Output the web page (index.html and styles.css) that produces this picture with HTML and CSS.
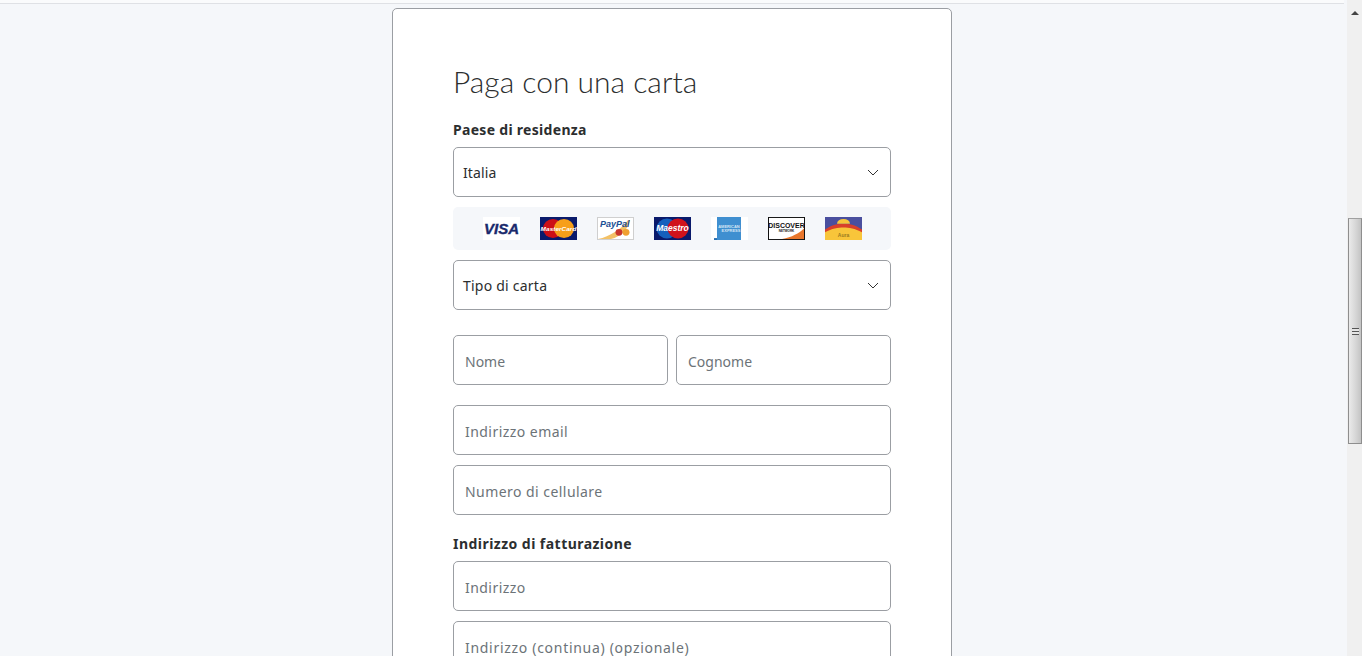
FILE: index.html
```html
<!DOCTYPE html>
<html lang="it">
<head>
  <meta charset="UTF-8" />
  <meta name="viewport" content="width=device-width, initial-scale=1.0"/>
  <title>Paga con una carta</title>
  <link rel="stylesheet" href="styles.css">
</head>

<body>
  <div class="page">
    <main class="main">
      <div class="topline"></div>
      <form class="card">
        <h1 class="title">Paga con una carta</h1>

        <div class="label">Paese di residenza</div>
        <div class="select">
          <span>Italia</span>
          <svg class="chev" width="12" height="7" viewBox="0 0 12 7"><path d="M1 1l5 5 5-5" fill="none" stroke="#333" stroke-width="1"/></svg>
        </div>

        <div class="logos">
          <svg class="logo" viewBox="0 0 37 24" preserveAspectRatio="none">
            <rect width="37" height="24" fill="#fff"/>
            <text x="18.500" y="18" text-anchor="middle" class="t-visa">VISA</text>
          </svg>
          <svg class="logo" viewBox="0 0 37 24" preserveAspectRatio="none">
            <rect width="37" height="24" fill="#0a1a6b"/>
            <circle cx="13" cy="12" r="10" fill="#cc0f16"/>
            <circle cx="24" cy="12" r="10" fill="#f79f1a"/>
            <text x="18.500" y="14.500" text-anchor="middle" class="t-mc">MasterCard</text>
          </svg>
          <svg class="logo" viewBox="0 0 37 24" preserveAspectRatio="none">
            <rect x="0.500" y="0.500" width="36" height="23" fill="#fff" stroke="#cfcfcf"/>
            <path d="M1 23C13 20 24 13 31 3l2 0C31 13 24 20 14 23z" fill="#f3c166"/>
            <text x="3" y="10" class="t-pp">PayPal</text>
            <circle cx="22" cy="16" r="3.500" fill="#c8362e"/>
            <circle cx="29" cy="16" r="3.500" fill="#f0a030"/>
          </svg>
          <svg class="logo" viewBox="0 0 37 24" preserveAspectRatio="none">
            <rect width="37" height="24" fill="#0a1a6b"/>
            <circle cx="13" cy="12" r="10.500" fill="#1560bd"/>
            <circle cx="24" cy="12" r="10.500" fill="#d0121b"/>
            <text x="18.500" y="14.500" text-anchor="middle" class="t-ma">Maestro</text>
          </svg>
          <svg class="logo" viewBox="0 0 37 24" preserveAspectRatio="none">
            <rect width="37" height="24" fill="#fff"/>
            <rect x="6" y="0" width="24" height="24" fill="#3f8fd0"/>
            <text x="18" y="11" text-anchor="middle" class="t-amex">AMERICAN</text>
            <text x="20" y="16" text-anchor="middle" class="t-amex">EXPRESS</text>
            <rect x="3" y="22" width="3" height="2" fill="#2a6fb0"/>
          </svg>
          <svg class="logo" viewBox="0 0 37 24" preserveAspectRatio="none">
            <rect x="0.500" y="0.500" width="36" height="23" fill="#fff" stroke="#111"/>
            <path d="M14 23C24 21 31 17 36 12v11z" fill="#e8762c"/>
            <text x="18.500" y="11.500" text-anchor="middle" class="t-disc">DISCOVER</text>
            <text x="18.500" y="15.500" text-anchor="middle" class="t-net">NETWORK</text>
          </svg>
          <svg class="logo" viewBox="0 0 37 24" preserveAspectRatio="none">
            <rect width="37" height="24" fill="#f8c53a"/>
            <path d="M0 0h37v15C30 9 24 8 18.500 8S7 9 0 15z" fill="#4a4f9e"/>
            <path d="M0 13C7 8 13 7 18.500 7S30 8 37 13v3C30 12 24 11 18.500 11S7 12 0 16z" fill="#d9402a"/>
            <path d="M12 7a6.500 5 0 0 1 13 0z" fill="#f8c53a"/>
            <text x="18.500" y="20.500" text-anchor="middle" class="t-aura">Aura</text>
          </svg>
        </div>

        <div class="select tipo">
          <span>Tipo di carta</span>
          <svg class="chev" width="12" height="7" viewBox="0 0 12 7"><path d="M1 1l5 5 5-5" fill="none" stroke="#333" stroke-width="1"/></svg>
        </div>

        <div class="names">
          <input class="field" type="text" placeholder="Nome" />
          <input class="field" type="text" placeholder="Cognome" />
        </div>

        <input class="field wide" type="text" placeholder="Indirizzo email" />
        <input class="field wide" type="text" placeholder="Numero di cellulare" />

        <div class="label billing">Indirizzo di fatturazione</div>
        <input class="field wide" type="text" placeholder="Indirizzo" />
        <input class="field wider" type="text" placeholder="Indirizzo (continua) (opzionale)" />
      </form>
    </main>

    <div class="scrollbar">
      <div class="arrow"></div>
      <div class="thumb">
        <div class="grip"></div>
      </div>
    </div>
  </div>
</body>
</html>
```

FILE: styles.css
```css
* {
  box-sizing: border-box;
}

html, body {
  margin: 0;
  padding: 0;
  height: 100%;
  overflow: hidden;
}

body {
  font-family: 'Noto Sans', 'Open Sans', sans-serif;
  font-size: 14px;
  color: #2c2e2f;
  background: #f5f7fa;
}

.page {
  display: flex;
  height: 656px;
  overflow: hidden;
}

.main {
  flex: 1;
  display: flex;
  flex-direction: column;
  align-items: center;
  padding-right: 3px;
}

.topline {
  width: 100%;
  height: 4px;
  background: #fafbfc;
  border-bottom: 1px solid #dfe1e5;
  flex: none;
}

.card {
  flex: none;
  width: 560px;
  margin-top: 4px;
  padding: 48px 60px 60px;
  background: #fff;
  border: 1px solid #9b9ea3;
  border-radius: 5px;
}

.title {
  margin: 0;
  font-family: Lato, sans-serif;
  font-size: 30px;
  font-weight: 300;
  line-height: 48px;
  color: #2c2e2f;
}

.label {
  margin-top: 15px;
  height: 20px;
  margin-bottom: 7px;
  font-weight: 700;
  font-size: 14px;
  line-height: 20px;
  letter-spacing: 0.3px;
}

.billing {
  margin-top: 19px;
  margin-bottom: 7px;
  letter-spacing: 0.46px;
}

.select {
  display: flex;
  justify-content: space-between;
  align-items: center;
  height: 50px;
  padding: 0 11px 0 9px;
  border: 1px solid #9b9ea3;
  border-radius: 5px;
  background: #fff;
  font-size: 14px;
  letter-spacing: 0.1px;
}

.tipo {
  letter-spacing: 0.23px;
}

.logos {
  display: flex;
  justify-content: center;
  gap: 20px;
  margin: 10px 0;
  padding: 10px 0;
  height: 43px;
  background: #f5f7fa;
  border-radius: 5px;
}

.logo {
  width: 37px;
  height: 23px;
  flex: none;
}

.t-visa {
  font: italic 700 15px 'Liberation Sans', sans-serif;
  fill: #1a2a6c;
  stroke: #1a2a6c;
  stroke-width: 0.4;
}

.t-mc {
  font: italic 700 6.500px 'Liberation Sans', sans-serif;
  fill: #fff;
}

.t-pp {
  font: italic 700 9px 'Liberation Sans', sans-serif;
  fill: #1c4f94;
}

.t-ma {
  font: italic 700 8.500px 'Liberation Sans', sans-serif;
  fill: #fff;
}

.t-amex {
  font: 700 4px 'Liberation Sans', sans-serif;
  fill: #d5e6f5;
}

.t-disc {
  font: 700 7px 'Liberation Sans', sans-serif;
  fill: #111;
}

.t-net {
  font: 700 3px 'Liberation Sans', sans-serif;
  fill: #111;
}

.t-aura {
  font: 700 5px 'Liberation Sans', sans-serif;
  fill: #9a7a20;
}

.names {
  display: grid;
  grid-template-columns: 1fr 1fr;
  gap: 8px;
  margin-top: 25px;
  margin-bottom: 20px;
}

.field {
  display: block;
  width: 100%;
  height: 50px;
  margin: 0 0 10px;
  padding: 2px 11px 0;
  border: 1px solid #9b9ea3;
  border-radius: 5px;
  background: #fff;
  font-family: 'Noto Sans', 'Open Sans', sans-serif;
  font-size: 14px;
  color: #2c2e2f;
}

.names .field {
  margin: 0;
}

.wide {
  letter-spacing: 0.45px;
}

.wider {
  letter-spacing: 0.7px;
}

.field::placeholder {
  color: #6c7378;
  opacity: 1;
}

.scrollbar {
  flex: none;
  width: 15px;
  display: flex;
  flex-direction: column;
  align-items: center;
  background: #f0f0f0;
}

.arrow {
  margin-top: 11px;
  width: 0;
  height: 0;
  border-left: 4px solid transparent;
  border-right: 4px solid transparent;
  border-bottom: 4px solid #444;
}

.thumb {
  display: flex;
  align-items: center;
  justify-content: center;
  width: 14px;
  height: 226px;
  margin-top: 203px;
  margin-left: 1px;
  background: linear-gradient(to right, #eaeaea, #d8d8d8 50%, #c4c4c4);
  border: 1px solid #8e8e8e;
  border-top-color: #a0a0a0;
}

.grip {
  width: 7px;
  height: 7px;
  background: repeating-linear-gradient(to bottom, #555 0, #555 1px, #e4e4e4 1px, #e4e4e4 3px);
}
```
